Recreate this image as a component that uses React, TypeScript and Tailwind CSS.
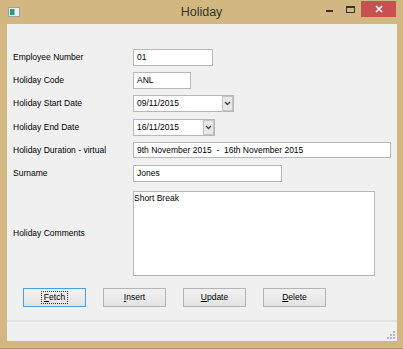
import React from "react";

const Field = ({ w, h = 17, children, pad = "px-[3px]" }: { w: number; h?: number; children?: React.ReactNode; pad?: string }) => (
  <div
    className={`border border-[#b5b7bd] bg-white flex items-center ${pad} text-[8.5px] leading-none text-black`}
    style={{ width: w, height: h }}
  >
    {children}
  </div>
);

const Combo = ({ w, value }: { w: number; value: string }) => (
  <div className="border border-[#b5b7bd] bg-white flex items-stretch h-[17px] text-[8.5px] leading-none text-black" style={{ width: w }}>
    <div className="flex-1 flex items-center pl-[3px]">{value}</div>
    <div className="w-[11px] border border-[#c4c4c4] bg-[#e8e8e8] flex items-center justify-center">
      <svg width="7" height="5" viewBox="0 0 7 5">
        <path d="M1 1 L3.5 3.5 L6 1" stroke="#444" strokeWidth="1.3" fill="none" />
      </svg>
    </div>
  </div>
);

const Row = ({ label, children, className = "" }: { label: string; children: React.ReactNode; className?: string }) => (
  <div className={`flex items-center ${className}`}>
    <div className="w-[126px] pl-[6px] text-[8.5px] leading-none text-black">{label}</div>
    {children}
  </div>
);

const Btn = ({ letter, rest, focused }: { letter: string; rest: string; focused?: boolean }) => (
  <div
    className={`w-[63px] h-[19px] flex items-center justify-center text-[8.5px] leading-none text-black bg-gradient-to-b from-[#f2f2f2] to-[#e3e3e3] border ${
      focused ? "border-[#4a9ee8]" : "border-[#b3b3b3]"
    }`}
  >
    <span className={focused ? "outline outline-1 outline-dotted outline-[#333] outline-offset-[1px] px-[1px]" : ""}>
      <span className="underline underline-offset-[1px]">{letter}</span>
      {rest}
    </span>
  </div>
);

export default function App() {
  return (
    <div className="w-[403px] h-[349px] bg-[#d3b781] flex flex-col font-['Liberation_Sans',Arial,sans-serif] border-b border-[#b49a68]">
      {/* title bar */}
      <div className="h-[24px] grid grid-cols-[1fr_auto_1fr]">
        <div className="flex items-start pl-[8px] pt-[7px]">
          <svg width="12" height="10" viewBox="0 0 12 10">
            <rect x="0.5" y="0.5" width="11" height="9" fill="#e9eef0" stroke="#9aa3a6" />
            <rect x="2" y="2" width="4" height="6" fill="#2f9a73" />
            <rect x="6" y="2" width="1" height="6" fill="#7cc4e0" />
          </svg>
        </div>
        <div className="pt-[5px] text-[12.5px] leading-[14px] text-[#333]">Holiday</div>
        <div className="flex justify-end items-start pr-[7px]">
          <div className="w-[21px] h-[17px] flex justify-center">
            <div className="mt-[10px] w-[7px] h-[2px] bg-[#333]" />
          </div>
          <div className="w-[21px] h-[17px] flex justify-center">
            <div className="mt-[6px] w-[9px] h-[7px] border border-[#333] border-t-2" />
          </div>
          <div className="mt-[1px] w-[35px] h-[16px] bg-[#c75050] flex items-center justify-center">
            <svg width="8" height="8" viewBox="0 0 8 8">
              <path d="M1 1 L7 7 M7 1 L1 7" stroke="#fff" strokeWidth="1.6" />
            </svg>
          </div>
        </div>
      </div>

      {/* client area */}
      <div className="ml-[7px] mr-[6px] mb-[7px] flex-1 bg-[#f0f0f0] flex flex-col">
        <div className="flex flex-col">
          <Row label="Employee Number" className="mt-[25px]">
            <Field w={80}>01</Field>
          </Row>
          <Row label="Holiday Code" className="mt-[6px]">
            <Field w={58}>ANL</Field>
          </Row>
          <Row label="Holiday Start Date" className="mt-[6px]">
            <Combo w={101} value="09/11/2015" />
          </Row>
          <Row label="Holiday End Date" className="mt-[7px]">
            <Combo w={82} value="16/11/2015" />
          </Row>
          <Row label="Holiday Duration - virtual" className="mt-[6px]">
            <Field w={258} h={16}>
              <span className="whitespace-pre">9th November 2015  -  16th November 2015</span>
            </Field>
          </Row>
          <Row label="Surname" className="mt-[7px]">
            <Field w={149}>Jones</Field>
          </Row>
          <Row label="Holiday Comments" className="mt-[9px]">
            <div className="w-[242px] h-[85px] border border-[#b5b7bd] bg-white px-[0px] pt-[1px] text-[8.5px] leading-[10px] text-black">
              Short Break
            </div>
          </Row>
          <div className="mt-[12px] pl-[16px] flex gap-[17px]">
            <Btn letter="F" rest="etch" focused />
            <Btn letter="I" rest="nsert" />
            <Btn letter="U" rest="pdate" />
            <Btn letter="D" rest="elete" />
          </div>
        </div>
        <div className="flex-1" />
        <div className="h-[2px] bg-[#e2e2e2]" />
        <div className="h-[19px] flex justify-end items-end pr-[2px] pb-[2px]">
          <svg width="8" height="8" viewBox="0 0 8 8">
            <rect x="6" y="0" width="2" height="2" fill="#b8b8b8" />
            <rect x="3" y="3" width="2" height="2" fill="#b8b8b8" />
            <rect x="6" y="3" width="2" height="2" fill="#b8b8b8" />
            <rect x="0" y="6" width="2" height="2" fill="#b8b8b8" />
            <rect x="3" y="6" width="2" height="2" fill="#b8b8b8" />
            <rect x="6" y="6" width="2" height="2" fill="#b8b8b8" />
          </svg>
        </div>
      </div>
    </div>
  );
}
